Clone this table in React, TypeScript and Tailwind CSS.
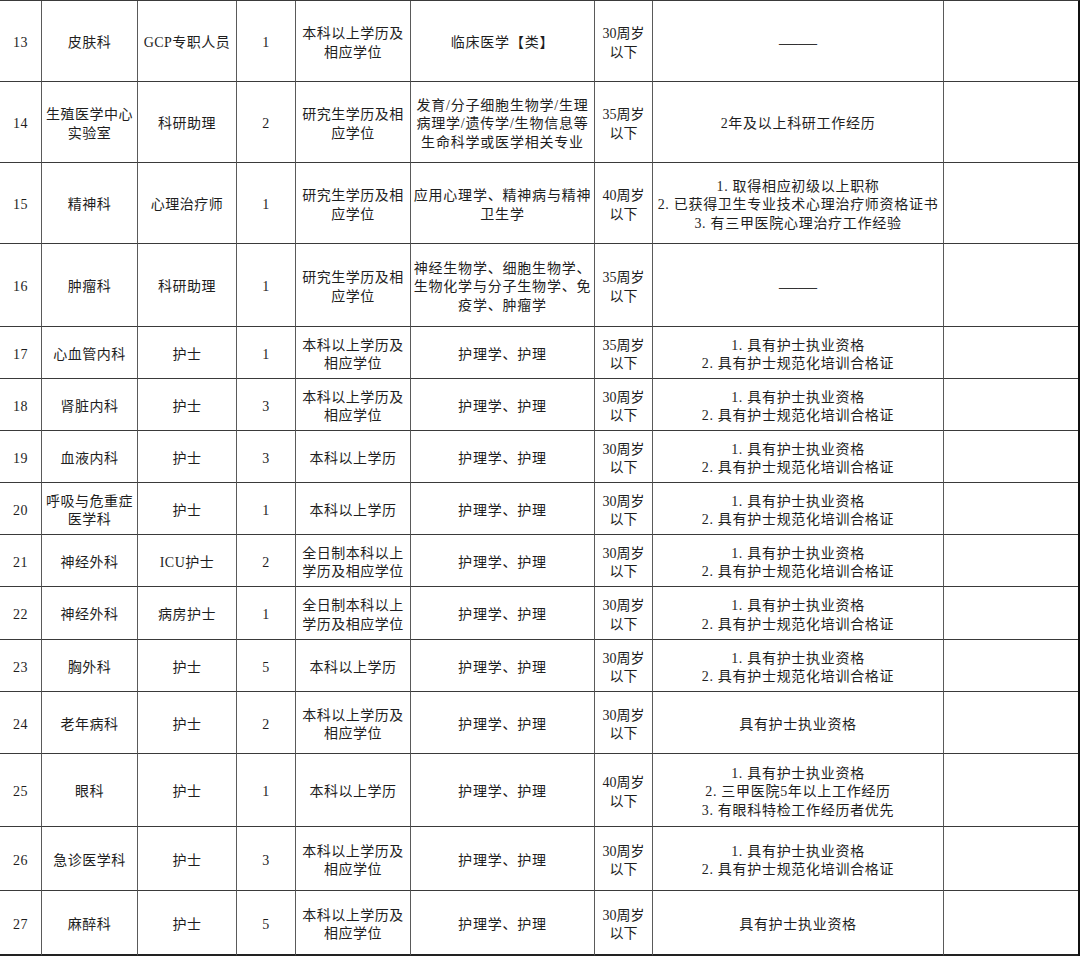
import React from 'react'

type Row = {
  no: string
  dept: string[]
  post: string
  count: string
  edu: string[]
  major: string[]
  age: string[]
  req: string[]
  h: number
}

const nurseReq = ['1. 具有护士执业资格', '2. 具有护士规范化培训合格证']
const benke = ['本科以上学历及', '相应学位']
const nursing = ['护理学、护理']

const rows: Row[] = [
  { no: '13', dept: ['皮肤科'], post: 'GCP专职人员', count: '1', edu: benke, major: ['临床医学【类】'], age: ['30周岁', '以下'], req: ['——'], h: 81 },
  { no: '14', dept: ['生殖医学中心', '实验室'], post: '科研助理', count: '2', edu: ['研究生学历及相', '应学位'], major: ['发育/分子细胞生物学/生理', '病理学/遗传学/生物信息等', '生命科学或医学相关专业'], age: ['35周岁', '以下'], req: ['2年及以上科研工作经历'], h: 81 },
  { no: '15', dept: ['精神科'], post: '心理治疗师', count: '1', edu: ['研究生学历及相', '应学位'], major: ['应用心理学、精神病与精神', '卫生学'], age: ['40周岁', '以下'], req: ['1. 取得相应初级以上职称', '2. 已获得卫生专业技术心理治疗师资格证书', '3. 有三甲医院心理治疗工作经验'], h: 81 },
  { no: '16', dept: ['肿瘤科'], post: '科研助理', count: '1', edu: ['研究生学历及相', '应学位'], major: ['神经生物学、细胞生物学、', '生物化学与分子生物学、免', '疫学、肿瘤学'], age: ['35周岁', '以下'], req: ['——'], h: 83 },
  { no: '17', dept: ['心血管内科'], post: '护士', count: '1', edu: benke, major: nursing, age: ['35周岁', '以下'], req: nurseReq, h: 52 },
  { no: '18', dept: ['肾脏内科'], post: '护士', count: '3', edu: benke, major: nursing, age: ['30周岁', '以下'], req: nurseReq, h: 52 },
  { no: '19', dept: ['血液内科'], post: '护士', count: '3', edu: ['本科以上学历'], major: nursing, age: ['30周岁', '以下'], req: nurseReq, h: 52 },
  { no: '20', dept: ['呼吸与危重症', '医学科'], post: '护士', count: '1', edu: ['本科以上学历'], major: nursing, age: ['30周岁', '以下'], req: nurseReq, h: 52 },
  { no: '21', dept: ['神经外科'], post: 'ICU护士', count: '2', edu: ['全日制本科以上', '学历及相应学位'], major: nursing, age: ['30周岁', '以下'], req: nurseReq, h: 52 },
  { no: '22', dept: ['神经外科'], post: '病房护士', count: '1', edu: ['全日制本科以上', '学历及相应学位'], major: nursing, age: ['30周岁', '以下'], req: nurseReq, h: 53 },
  { no: '23', dept: ['胸外科'], post: '护士', count: '5', edu: ['本科以上学历'], major: nursing, age: ['30周岁', '以下'], req: nurseReq, h: 52 },
  { no: '24', dept: ['老年病科'], post: '护士', count: '2', edu: benke, major: nursing, age: ['30周岁', '以下'], req: ['具有护士执业资格'], h: 62 },
  { no: '25', dept: ['眼科'], post: '护士', count: '1', edu: ['本科以上学历'], major: nursing, age: ['40周岁', '以下'], req: ['1. 具有护士执业资格', '2. 三甲医院5年以上工作经历', '3. 有眼科特检工作经历者优先'], h: 73 },
  { no: '26', dept: ['急诊医学科'], post: '护士', count: '3', edu: benke, major: nursing, age: ['30周岁', '以下'], req: nurseReq, h: 64 },
  { no: '27', dept: ['麻醉科'], post: '护士', count: '5', edu: benke, major: nursing, age: ['30周岁', '以下'], req: ['具有护士执业资格'], h: 65 },
]

const widths = ['w-[42px]', 'w-[96px]', 'w-[99px]', 'w-[59px]', 'w-[115px]', 'w-[184px]', 'w-[58px]', 'w-[291px]', 'w-[134px]']
const tracks = ['tracking-[0.5px]', 'tracking-[0.5px]', 'tracking-[0.5px]', 'tracking-[0.5px]', 'tracking-[0.5px]', 'tracking-[0.8px]', 'tracking-[0px]', 'tracking-[0.7px]', 'tracking-[0px]']

function Cell({ lines, col, last }: { lines: string[]; col: number; last: boolean }) {
  return (
    <div
      className={`${widths[col]} ${tracks[col]} shrink-0 pt-[5px] flex flex-col items-center justify-center text-center ${col < 8 ? 'border-r border-[#5a5a5a]' : ''} ${last ? 'border-b-2 border-b-[#222]' : 'border-b border-b-[#3a3a3a]'}`}
    >
      {lines.map((l, i) =>
        l === '——' ? (
          <div key={i} className="whitespace-nowrap leading-[18.5px] tracking-normal text-[19px] font-light text-[#333]">
            {l}
          </div>
        ) : (
          <div key={i} className="whitespace-nowrap leading-[18.5px]">
            {l}
          </div>
        )
      )}
    </div>
  )
}

export default function App() {
  return (
    <main
      className="w-[1080px] h-[957px] bg-white text-[#1e1e1e] text-[14px] overflow-hidden"
      style={{ fontFamily: '"Liberation Serif", "Noto Sans CJK SC", serif' }}
    >
      <div className="w-[1080px] border-t border-t-[#3a3a3a] border-r-2 border-r-[#111] flex flex-col">
        {rows.map((r, i) => {
          const last = i === rows.length - 1
          return (
            <div key={r.no} className="flex" style={{ height: r.h }}>
              <Cell lines={[r.no]} col={0} last={last} />
              <Cell lines={r.dept} col={1} last={last} />
              <Cell lines={[r.post]} col={2} last={last} />
              <Cell lines={[r.count]} col={3} last={last} />
              <Cell lines={r.edu} col={4} last={last} />
              <Cell lines={r.major} col={5} last={last} />
              <Cell lines={r.age} col={6} last={last} />
              <Cell lines={r.req} col={7} last={last} />
              <Cell lines={[]} col={8} last={last} />
            </div>
          )
        })}
      </div>
    </main>
  )
}
